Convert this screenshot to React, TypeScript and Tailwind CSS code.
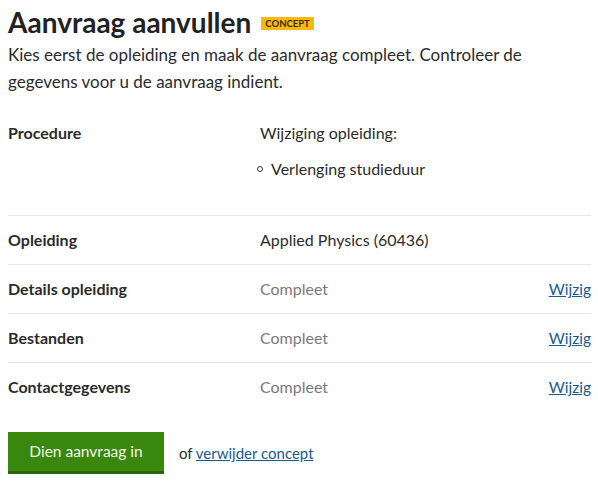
import React from 'react';

const rows = [
  { label: 'Opleiding', value: 'Applied Physics (60436)', muted: false, link: false },
  { label: 'Details opleiding', value: 'Compleet', muted: true, link: true },
  { label: 'Bestanden', value: 'Compleet', muted: true, link: true },
  { label: 'Contactgegevens', value: 'Compleet', muted: true, link: true },
];

const App: React.FC = () => {
  return (
    <div className="px-2 pt-[5px] pb-2 text-[#2b2b2b] font-['Lato',sans-serif]">
      <div className="flex items-center gap-[10px]">
        <h1 className="text-[28px] leading-[34px] font-bold text-[#222]">Aanvraag aanvullen</h1>
        <span className="bg-[#f9b912] text-[#3b2a05] text-[9.5px] font-bold leading-[13px] px-[4px] mt-[3px]">
          CONCEPT
        </span>
      </div>
      <p className="text-[17px] leading-[27px] mt-[2px] pr-10">
        Kies eerst de opleiding en maak de aanvraag compleet. Controleer de gegevens voor u de aanvraag indient.
      </p>

      <div className="mt-[14px] w-[583px]">
        <div className="flex py-3">
          <div className="w-[252px] text-[16px] leading-6 font-bold">Procedure</div>
          <div className="flex-1 text-[16px] leading-6">
            <p>Wijziging opleiding:</p>
            <ul className="mt-3 mb-[22px]">
              <li className="flex items-center">
                <span className="w-[6px] h-[6px] rounded-full border border-[#333] ml-[-3px] mr-[8px]" />
                Verlenging studieduur
              </li>
            </ul>
          </div>
        </div>
        {rows.map((row, i) => (
          <div
            key={row.label}
            className={'flex py-3 ' + (i < rows.length - 1 ? 'border-y border-[#e6e6e6] -mb-px' : 'border-t border-[#e6e6e6]')}
          >
            <div className="w-[252px] text-[16px] leading-6 font-bold">{row.label}</div>
            <div className={'flex-1 text-[16px] leading-6 ' + (row.muted ? 'text-[#7a7a7a]' : '')}>{row.value}</div>
            {row.link && (
              <a href="#" className="text-[15.5px] leading-6 text-[#1a5b8c] underline">
                Wijzig
              </a>
            )}
          </div>
        ))}
      </div>

      <div className="mt-[21px] flex items-center">
        <button className="h-[42px] w-[156px] bg-[#39870c] border-b-[3px] border-[#2a6509] text-[#f2f5e8] text-[15.5px]">
          Dien aanvraag in
        </button>
        <span className="ml-[15px] text-[15px]">
          of{' '}
          <a href="#" className="text-[#1a5b8c] underline">
            verwijder concept
          </a>
        </span>
      </div>
    </div>
  );
};

export default App;
